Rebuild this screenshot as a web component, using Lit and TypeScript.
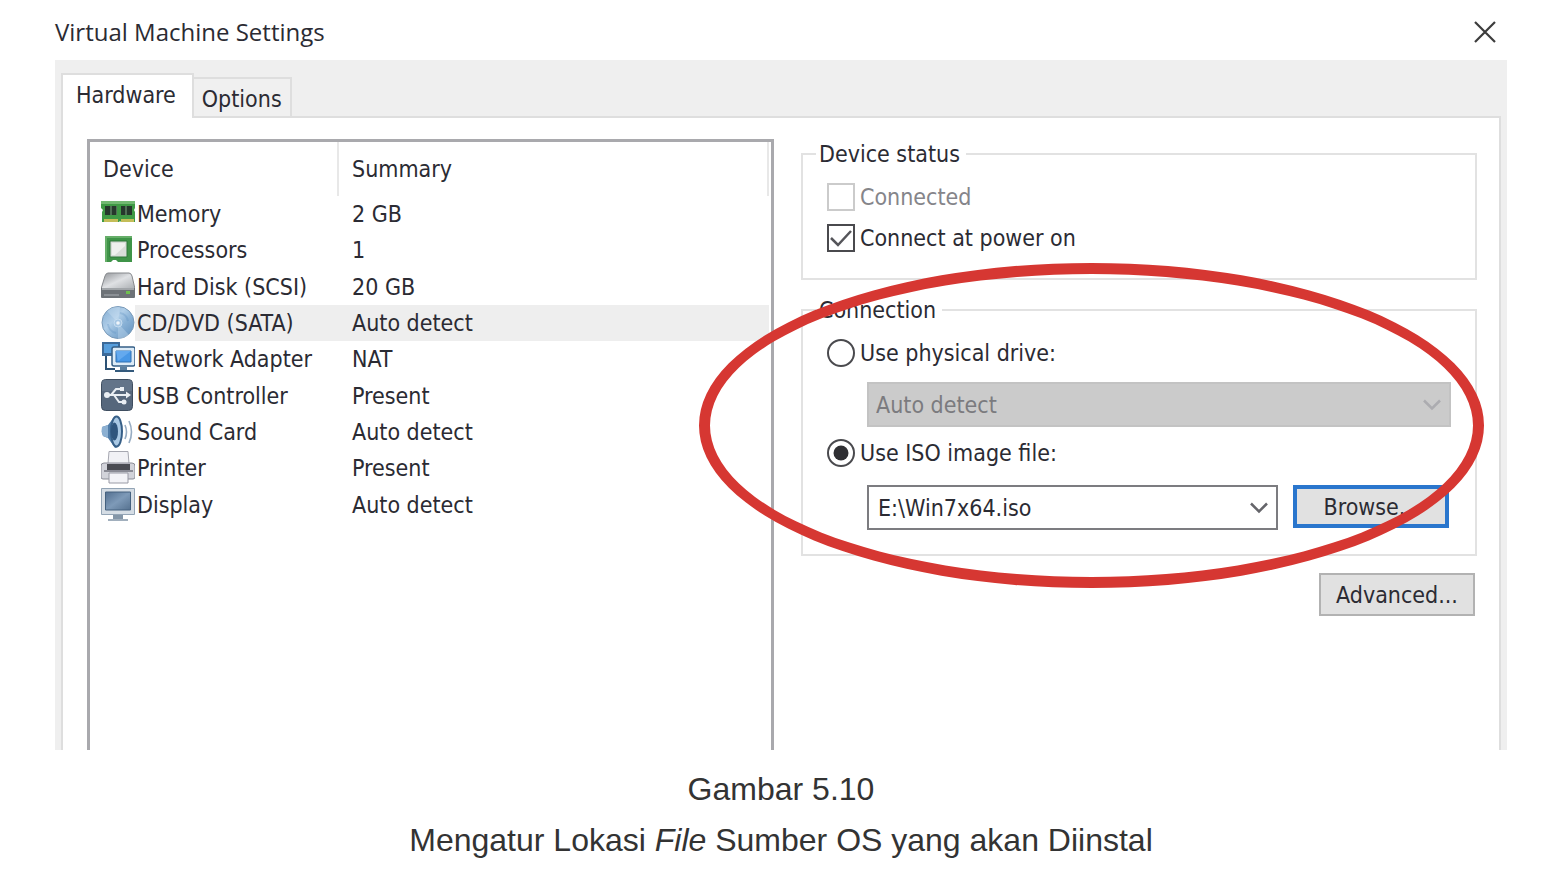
import { LitElement, html, svg, css, TemplateResult } from "lit";
import { customElement, property, state } from "lit/decorators.js";

interface Device {
  id: string;
  name: string;
  summary: string;
}

const DEVICES: Device[] = [
  { id: "memory", name: "Memory", summary: "2 GB" },
  { id: "cpu", name: "Processors", summary: "1" },
  { id: "disk", name: "Hard Disk (SCSI)", summary: "20 GB" },
  { id: "cd", name: "CD/DVD (SATA)", summary: "Auto detect" },
  { id: "network", name: "Network Adapter", summary: "NAT" },
  { id: "usb", name: "USB Controller", summary: "Present" },
  { id: "sound", name: "Sound Card", summary: "Auto detect" },
  { id: "printer", name: "Printer", summary: "Present" },
  { id: "display", name: "Display", summary: "Auto detect" },
];

const GLYPHS: Record<string, TemplateResult> = {
  memory: svg`
    <path d="M0 4h34v7l-1 2 1 2v10H20l-1-1-1 1H1V15l1-2-2-2z" fill="#3f9a45"/>
    <path d="M0 4h34v3H0z" fill="#72b972"/>
    <path d="M4 9h5v9H4zM11 9h4v9h-4zM20 9h4v9h-4zM26 9h5v9h-5z" fill="#26382c"/>
    <path d="M9 9h2v9H9zM15 9h1v9h-1zM24 9h2v9h-2z" fill="#4f6f55"/>
    <path d="M3 22h14v3H3zM20 22h13v3H20z" fill="#c4bd58"/>`,
  cpu: svg`
    <path d="M4 3h27v26H17l-2-2h-3l-2 2H4z" fill="#3f9448"/>
    <path d="M4 3h27v2H6v24H4z" fill="#66ae69"/>
    <path d="M9 8h17v16H9z" fill="#d9ddd9" stroke="#2f7739" stroke-width="1"/>
    <path d="M11 10h13v3L14 22h-3z" fill="#eff0ee"/>`,
  disk: svg`
    <defs><linearGradient id="dk" x1="0" y1="0" x2="1" y2="1">
      <stop offset="0" stop-color="#8f9296"/><stop offset=".5" stop-color="#dfe1e4"/><stop offset="1" stop-color="#a9adb1"/>
    </linearGradient></defs>
    <path d="M7 3h21q2 0 3 3l3 13H0L4 6q1-3 3-3z" fill="url(#dk)" stroke="#85888c" stroke-width="1"/>
    <path d="M0 18h34v9q0 1-1 1H1q-1 0-1-1z" fill="#6d7277"/>
    <path d="M1 18h32v2H1z" fill="#a1a5a9"/>
    <path d="M3 24h15v2H3z" fill="#8b9095"/>
    <rect x="25" y="21" width="4" height="3" fill="#6fc04f"/>`,
  cd: svg`
    <defs><linearGradient id="cd" x1="0" y1="0" x2="1" y2="1">
      <stop offset="0" stop-color="#7fa9d0"/><stop offset=".4" stop-color="#b0cee8"/><stop offset=".6" stop-color="#8bb3d7"/><stop offset="1" stop-color="#5f8fbd"/>
    </linearGradient></defs>
    <circle cx="17" cy="16.500" r="16" fill="url(#cd)" stroke="#7899b8"/>
    <path d="M17 17L6 5Q12 0 19 1zM17 17l11 12q-5 4-11 4z" fill="#d9eaf7" opacity=".3"/>
    <path d="M7 18a10 10 0 0 0 8 9M27 15a10 10 0 0 0-8-8" fill="none" stroke="#5c8fc0" stroke-width="2" opacity=".3"/>
    <circle cx="17" cy="17" r="4" fill="#a6c7e4" stroke="#c5dcf0"/>
    <circle cx="17" cy="17" r="1.800" fill="#eff5fa"/>`,
  network: svg`
    <path d="M1 0h18v14H1z" fill="#3c6a99"/><path d="M3 2h14v9H3z" fill="#579edc"/>
    <path d="M5 14v13h9" fill="none" stroke="#2d5275" stroke-width="2"/>
    <path d="M13 5h19q2 0 2 2v15q0 2-2 2H13q-2 0-2-2V7q0-2 2-2z" fill="#dcebf7" stroke="#345f87" stroke-width="1.5"/>
    <path d="M15 9h15v11H15z" fill="#4897e6" stroke="#2f70b3"/>
    <path d="M15 9h15L17 19z" fill="#64a9ee"/>
    <path d="M19 25h7v3h-7z" fill="#5b7f9f"/><path d="M14 28h19v2H14z" fill="#345a7c"/>`,
  usb: svg`
    <rect x=".5" y=".5" width="31" height="31" rx="4" fill="#56677c" stroke="#3f4e60"/>
    <path d="M3 1h26q2 0 2 3v8H1V4q0-3 2-3z" fill="#74849a" opacity=".45"/>
    <path d="M6 16h19M10 16l5-6h5M13 16l5 7h4" fill="none" stroke="#e9eef3" stroke-width="2"/>
    <circle cx="6" cy="16" r="3" fill="#e9eef3"/><path d="M25 12.500l5 3.500-5 3.500z" fill="#e9eef3"/>
    <path d="M19 8h4v4h-4z" fill="#e9eef3"/><circle cx="23" cy="23" r="2.500" fill="#e9eef3"/>`,
  sound: svg`
    <path d="M1 12l6-2 7-9q5-1 6 6 2 9 0 19-2 7-6 7l-7-10-5-2q-2-4-1-9z" fill="#4f7ba7"/>
    <path d="M1 12l6-2v13l-5-2q-2-4-1-9z" fill="#8cb0d2"/>
    <ellipse cx="15.500" cy="16.500" rx="5.500" ry="15" fill="#a9c8e4" stroke="#375f87" stroke-width="2"/>
    <ellipse cx="13.500" cy="16.500" rx="3.500" ry="9" fill="#2f557d"/>
    <path d="M24 10q3 7 0 14M28 6q5 11 0 22" fill="none" stroke="#97acc2" stroke-width="1.600"/>`,
  printer: svg`
    <path d="M8 .5h19l1 12H7z" fill="#f1f1f5" stroke="#a6a7b0"/>
    <path d="M3 12h28q3 0 3 3v11q0 2-2 2H2q-2 0-2-2V15q0-3 3-3z" fill="#d2d3da" stroke="#8b8c96"/>
    <path d="M6 13h23v7H6z" fill="#4a4b52"/><path d="M3 19h29v2H3z" fill="#8a8b95"/>
    <path d="M8 22h19v10H8z" fill="#f3f3f7" stroke="#999aa5"/>`,
  display: svg`
    <defs><linearGradient id="dp" x1="0" y1="0" x2="1" y2="1">
      <stop offset="0" stop-color="#526f90"/><stop offset=".5" stop-color="#7e9ab8"/><stop offset="1" stop-color="#55718f"/>
    </linearGradient></defs>
    <path d="M.5 .5h33v26H.5z" fill="#d5dde5" stroke="#93a4b5"/>
    <path d="M4.500 4h25v18h-25z" fill="url(#dp)" stroke="#44617f"/>
    <path d="M12 27h10v4H12z" fill="#8496a8"/><path d="M7 31h20v2H7z" fill="#a1afbd"/>`,
};

@customElement("device-icon")
export class DeviceIcon extends LitElement {
  @property() name = "";

  static styles = css`
    :host { display: block; width: 34px; height: 34px; }
    .glyph { display: block; width: 100%; height: 100%; }
  `;

  render() {
    return html`<svg class="glyph" viewBox="0 0 34 34" aria-hidden="true">${GLYPHS[this.name]}</svg>`;
  }
}

@customElement("app-root")
export class AppRoot extends LitElement {
  @state() private selected = "cd";
  @state() private source = "iso";

  static styles = css`
    :host {
      display: block;
      background: #fff;
      color: #2b2b33;
      font: 23px/30px "DejaVu Sans Condensed", Tahoma, sans-serif;
    }
    * { box-sizing: border-box; }
    button, select, input { font: inherit; color: inherit; margin: 0; border-radius: 0; }

    .figure { margin: 0; padding: 0 45px 0 55px; }
    .titlebar {
      display: flex;
      align-items: center;
      justify-content: space-between;
      height: 60px;
      padding: 4px 10px 0 0;
    }
    .title { margin: 0; font-size: 24px; font-weight: 400; font-family: "Open Sans", sans-serif; }
    .close { display: block; padding: 0; border: 0; background: none; }
    .close svg { display: block; width: 24px; height: 24px; }

    .body { padding: 13px 6px 0; background: #efefef; }
    .tabs { display: flex; align-items: flex-end; }
    .tab {
      height: 39px;
      padding: 2px 8px 0;
      border: 2px solid #dedede;
      border-left: 0;
      border-bottom: 0;
      background: #f0f0f0;
      line-height: 30px;
    }
    .tab.active {
      height: 45px;
      margin-bottom: -2px;
      padding: 0 16px 4px 13px;
      border-left: 2px solid #dedede;
      background: #fff;
    }
    .pane {
      display: grid;
      grid-template-columns: 687fr 676fr;
      gap: 27px;
      padding: 21px 22px 0 24px;
      border: 2px solid #dedede;
      border-bottom: 0;
      background: #fff;
    }

    .list {
      min-height: 611px;
      padding-right: 2px;
      border: 3px solid #a9a9ad;
      border-bottom: 0;
    }
    .devices { width: 100%; height: 381px; border-collapse: separate; border-spacing: 0; table-layout: fixed; }
    .col-icon { width: 45px; }
    .col-name { width: 204px; }
    .devices th {
      height: 54px;
      padding: 0 12px 0 13px;
      border-right: 2px solid #e8e8e8;
      font-weight: 400;
      text-align: left;
    }
    .devices td { height: 36px; padding: 0 0 0 13px; white-space: nowrap; }
    .devices .cell-icon { padding: 0 0 0 11px; }
    .devices .cell-name { padding: 0 0 0 2px; }
    .selected .cell-name, .selected .cell-summary { background: #eeeeee; }

    .settings { position: relative; }
    .group {
      min-width: 0;
      margin: 0 0 15px;
      padding: 7px 24px 20px;
      border: 2px solid #e2e2e2;
    }
    .group.connection { padding-bottom: 24px; }
    .group legend { margin-left: -11px; padding: 0 6px 0 3px; }
    .option { display: flex; align-items: center; gap: 5px; height: 41px; }
    .option.off { color: #85858a; }
    .mark { display: grid; width: 28px; height: 28px; }
    .mark input, .mark svg { grid-area: 1 / 1; width: 28px; height: 28px; }
    .mark input { appearance: none; border: 2px solid #4a4a4e; background: #fff; }
    .mark input:disabled { border-color: #cbcbcb; }
    .mark input[type="radio"] { border-radius: 50%; }
    .mark svg { pointer-events: none; }

    .indent { margin-left: 40px; }
    .field-row { display: flex; gap: 15px; }
    .spaced { margin-top: 9px; margin-bottom: 5px; }
    .file-row { margin-top: 12px; padding-right: 2px; }
    .combo { display: grid; flex: 1; align-items: center; }
    .combo select, .combo svg { grid-area: 1 / 1; }
    .combo select {
      appearance: none;
      width: 100%;
      height: 45px;
      padding: 0 44px 0 9px;
      border: 2px solid #7c7c80;
      background: #fff;
      opacity: 1;
    }
    .combo select:disabled { border-color: #c3c3c3; background: #cbcbcb; color: #7b7b7f; padding-left: 7px; }
    .combo svg { justify-self: end; width: 20px; height: 12px; margin-right: 9px; color: #65656a; pointer-events: none; }
    .combo select:disabled + svg { color: #acacb0; }

    .push {
      width: 156px;
      height: 43px;
      padding: 0;
      border: 2px solid #b2b2b2;
      background: #e1e1e1;
    }
    .push.focus { border: 4px solid #2a76cd; }
    .actions { display: flex; justify-content: flex-end; padding: 2px 2px 0 0; }

    .highlight {
      position: absolute;
      top: 124px;
      left: -102px;
      right: -7px;
      height: 325px;
      border: 11px solid #d63732;
      border-radius: 50%;
      pointer-events: none;
    }

    .caption {
      padding-top: 14px;
      color: #333;
      font: 32px/51px "Liberation Sans", Arial, sans-serif;
      text-align: center;
    }
    .caption p { margin: 0; }
  `;

  private chevron() {
    return html`<svg viewBox="0 0 20 12" aria-hidden="true">
      <path d="M2 1.500l8 8 8-8" fill="none" stroke="currentColor" stroke-width="2.500" />
    </svg>`;
  }

  private radio(value: string, label: string) {
    return html`<label class="option">
      <span class="mark">
        <input type="radio" name="source" .checked=${this.source === value} @change=${() => (this.source = value)} />
        <svg viewBox="0 0 28 28" aria-hidden="true">
          ${this.source === value ? svg`<circle cx="14" cy="14" r="7.500" fill="#2f2f33" />` : null}
        </svg>
      </span>
      ${label}
    </label>`;
  }

  render() {
    return html`
      <figure class="figure">
        <section aria-label="Virtual Machine Settings">
          <header class="titlebar">
            <h1 class="title">Virtual Machine Settings</h1>
            <button class="close" aria-label="Close">
              <svg viewBox="0 0 24 24"><path d="M2 2l20 20M22 2L2 22" stroke="#3c3c3c" stroke-width="2.200" /></svg>
            </button>
          </header>

          <div class="body">
            <div class="tabs" role="tablist">
              <button class="tab active" role="tab" aria-selected="true">Hardware</button>
              <button class="tab" role="tab" aria-selected="false">Options</button>
            </div>

            <div class="pane">
              <div class="list">
                <table class="devices">
                  <colgroup>
                    <col class="col-icon" />
                    <col class="col-name" />
                    <col />
                  </colgroup>
                  <thead>
                    <tr><th colspan="2">Device</th><th>Summary</th></tr>
                  </thead>
                  <tbody>
                    ${DEVICES.map(
                      (d) => html`<tr
                        class=${d.id === this.selected ? "selected" : ""}
                        @click=${() => (this.selected = d.id)}
                      >
                        <td class="cell-icon"><device-icon name=${d.id}></device-icon></td>
                        <td class="cell-name">${d.name}</td>
                        <td class="cell-summary">${d.summary}</td>
                      </tr>`
                    )}
                  </tbody>
                </table>
              </div>

              <div class="settings">
                <fieldset class="group">
                  <legend>Device status</legend>
                  <label class="option off">
                    <span class="mark"><input type="checkbox" disabled /></span>
                    Connected
                  </label>
                  <label class="option">
                    <span class="mark">
                      <input type="checkbox" checked />
                      <svg viewBox="0 0 28 28" aria-hidden="true">
                        <path d="M4 14l7 7L24 7" fill="none" stroke="#55555a" stroke-width="2.500" />
                      </svg>
                    </span>
                    Connect at power on
                  </label>
                </fieldset>

                <fieldset class="group connection">
                  <legend>Connection</legend>
                  ${this.radio("physical", "Use physical drive:")}
                  <div class="indent field-row spaced">
                    <div class="combo">
                      <select disabled aria-label="Physical drive"><option>Auto detect</option></select>
                      ${this.chevron()}
                    </div>
                  </div>
                  ${this.radio("iso", "Use ISO image file:")}
                  <div class="indent field-row file-row">
                    <div class="combo">
                      <select aria-label="ISO image file"><option>E:\\Win7x64.iso</option></select>
                      ${this.chevron()}
                    </div>
                    <button class="push focus">Browse...</button>
                  </div>
                </fieldset>

                <div class="actions"><button class="push">Advanced...</button></div>
                <div class="highlight"></div>
              </div>
            </div>
          </div>
        </section>

        <figcaption class="caption">
          <p>Gambar 5.10</p>
          <p>Mengatur Lokasi <em>File</em> Sumber OS yang akan Diinstal</p>
        </figcaption>
      </figure>
    `;
  }
}
